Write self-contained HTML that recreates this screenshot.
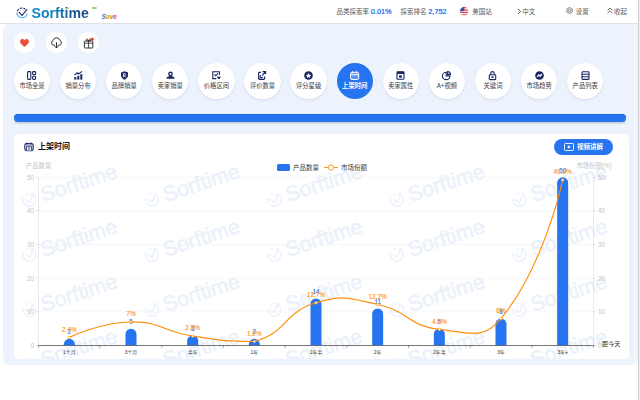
<!DOCTYPE html>
<html lang="zh-CN"><head><meta charset="utf-8"><title>Sorftime Save</title>
<style>
*{box-sizing:border-box;margin:0;padding:0}
html,body{width:640px;height:400px;overflow:hidden;background:#fff}
body{position:relative;font-family:"Liberation Sans","Noto Sans CJK SC",sans-serif;color:#333;font-size:6.5px;line-height:1}
.hdr{position:absolute;left:0;top:0;width:640px;height:23.7px;background:#fff;border-bottom:1px solid #dfe1e5}
.hdr .t{position:absolute;top:7.8px;white-space:nowrap;font-size:6.5px;line-height:8px;color:#5a5a5a}
.hdr .t b{font-weight:normal;color:#2168f0;font-size:7.3px;-webkit-text-stroke:.22px #2168f0}
.logo{position:absolute;left:31.6px;top:4.6px;font-weight:bold;font-size:14.1px;line-height:16px;letter-spacing:0;background:linear-gradient(90deg,#0a86cc 0%,#0d78bb 45%,#1c4f8c 75%,#1d4a85 100%);-webkit-background-clip:text;background-clip:text;color:transparent;white-space:nowrap}
.save{position:absolute;left:101.6px;top:12.6px;font-style:italic;font-weight:bold;font-size:6.6px;line-height:8px;white-space:nowrap}
.panel{position:absolute;left:3.4px;top:24.2px;width:635px;height:340.8px;background:#edf3fd;border-radius:6px 0 7px 7px}
.sb{position:absolute;left:637.8px;top:0;width:1.5px;height:400px;background:#c9cbcf}.sb2{position:absolute;left:639.3px;top:0;width:.7px;height:400px;background:#f1f1f1}.st{position:absolute;left:633.6px;top:24.2px;width:4.2px;height:338px;background:#f3f7fd}
.tc{position:absolute;top:31.5px;width:21px;height:21px;border-radius:50%;background:#fff}
.tc svg{position:absolute;left:0;top:0}
.nv{position:absolute;top:62.6px;width:36.4px;height:36.4px;border-radius:50%;background:#fff;color:#1b2560;box-shadow:0 1px 2.5px rgba(120,140,180,.22)}
.nv svg{position:absolute;left:13.7px;top:8.2px;overflow:visible}
.nv span{position:absolute;left:-6px;right:-6px;top:19.9px;text-align:center;font-size:6.3px;line-height:8px;color:#3a3a46;white-space:nowrap}
.nv.act{background:#2674ef;color:#fff;box-shadow:none}
.nv.act span{color:#fff;font-weight:bold}
.prog{position:absolute;left:14px;top:113.8px;width:612px;height:8.6px;border-radius:5px;background:#2674ef;box-shadow:0 1.5px 1.5px rgba(90,100,120,.28), inset 0 .8px 0 rgba(10,80,210,.55)}
.card{position:absolute;left:14px;top:133.8px;width:615px;height:225.2px;background:#fff;border-radius:4.5px}
.chart{position:absolute;left:14px;top:133px}
.ttl{position:absolute;left:38px;top:142.2px;font-size:8px;line-height:10px;font-weight:bold;color:#111;white-space:nowrap}
.btn{position:absolute;left:554px;top:139px;width:59px;height:16.4px;border-radius:9px;background:#2674ef;color:#fff}
.btn span{position:absolute;left:23px;top:4.2px;font-size:6.5px;line-height:8px;font-weight:bold;white-space:nowrap}
.btn svg{position:absolute;left:10px;top:4.4px}
svg text{font-family:"Liberation Sans","Noto Sans CJK SC",sans-serif}
.ax{font-size:6.3px;fill:#c4c4c4}
.xl{font-size:4.9px;fill:#333}
.bl{font-size:6.3px;fill:#2674ef;stroke:#2674ef;stroke-width:.1px}
.ll{font-size:6.5px;fill:#ff9214;stroke:#ff9214;stroke-width:.12px}
.lg{font-size:6.5px;fill:#3c3c3c}
</style></head><body>
<div class="hdr">
<svg style="position:absolute;left:15px;top:6px" width="15" height="15" viewBox="0 0 15 15"><defs><linearGradient id="lg1" x1="0" y1="0" x2="0" y2="1"><stop offset="0" stop-color="#2a8fd6"/><stop offset="1" stop-color="#3dbcec"/></linearGradient></defs><path d="M1.9 6.6 A5.2 5.2 0 0 0 12.2 7.6" fill="none" stroke="url(#lg1)" stroke-width="1.05"/><path d="M2.3 5.2 A5.2 5.2 0 0 1 10.6 3.4" fill="none" stroke="#1b2a6c" stroke-width="1.05" stroke-dasharray="2.6 1"/><path d="M3.8 5.9 L7 9.4 L12.2 3.3" fill="none" stroke="#1b2a6c" stroke-width="1.05"/></svg>
<div class="logo">Sorftime</div>
<svg style="position:absolute;left:91px;top:6px" width="8" height="4" viewBox="0 0 8 4"><path d="M1 2 H5.6" stroke="#5cb531" stroke-width="1.2"/></svg>
<svg style="position:absolute;left:65.8px;top:6.8px" width="4" height="3" viewBox="0 0 4 3"><path d="M0.2 1.8 L1.2 2.6 L3.6 0.3" stroke="#7ac943" stroke-width=".8" fill="none"/></svg>
<div class="save"><span style="color:#1a7fd0">S</span><span style="color:#f7931e">a</span><span style="color:#5cb531">v</span><span style="color:#ee3f8e">e</span></div>
<div class="t" style="left:336.5px">品类探索率 <b>0.01%</b></div>
<div class="t" style="left:400.5px">探索排名 <b>2,752</b></div>
<svg style="position:absolute;left:459.5px;top:7.2px" width="8.6" height="8.6" viewBox="0 0 10 10"><defs><clipPath id="fc"><circle cx="5" cy="5" r="5"/></clipPath></defs><g clip-path="url(#fc)"><rect width="10" height="10" fill="#fff"/><g fill="#e8404a"><rect y="0" width="10" height="1.45"/><rect y="2.85" width="10" height="1.45"/><rect y="5.7" width="10" height="1.45"/><rect y="8.55" width="10" height="1.45"/></g><rect width="5" height="5" fill="#3b4fa8"/></g></svg>
<div class="t" style="left:472.3px">美国站</div>
<svg style="position:absolute;left:517px;top:8px" width="5" height="7" viewBox="0 0 5 7"><path d="M1 1 L3.6 3.5 L1 6" fill="none" stroke="#333" stroke-width=".8"/></svg>
<div class="t" style="left:522.2px">中文</div>
<svg style="position:absolute;left:566.4px;top:7px" width="7.2" height="7.2" viewBox="0 0 10 10"><path d="M5 .7 L8.7 2.85 V7.15 L5 9.3 L1.3 7.15 V2.85 Z" fill="none" stroke="#555" stroke-width="1"/><circle cx="5" cy="5" r="1.7" fill="none" stroke="#555" stroke-width="1"/></svg>
<div class="t" style="left:575.8px">设置</div>
<svg style="position:absolute;left:606.6px;top:7.2px" width="6" height="7" viewBox="0 0 6 7"><path d="M.6 3.4 L3 1 L5.4 3.4 M.6 6.2 L3 3.8 L5.4 6.2" fill="none" stroke="#444" stroke-width=".75"/></svg>
<div class="t" style="left:614px">收起</div>
</div>
<div class="panel"></div>
<div class="st"></div><div class="sb"></div><div class="sb2"></div>
<div class="tc" style="left:14px"><svg width="21" height="21" viewBox="0 0 21 21"><path d="M10.5 15 C7.4 12.6 6 11.2 6 9.3 C6 7.9 7.1 6.9 8.3 6.9 C9.2 6.9 10 7.4 10.5 8.2 C11 7.4 11.8 6.9 12.7 6.9 C13.9 6.9 15 7.9 15 9.3 C15 11.2 13.6 12.6 10.5 15 Z" fill="#ea5138"/></svg></div>
<div class="tc" style="left:46px"><svg width="21" height="21" viewBox="0 0 21 21"><path d="M8.7 13.3 H7.9 A2.5 2.5 0 0 1 7.1 8.5 A3.5 3.5 0 0 1 13.9 8.5 A2.5 2.5 0 0 1 13.1 13.3 H12.3" fill="none" stroke="#222" stroke-width=".95" stroke-linecap="round"/><path d="M10.5 10.2 V15.8 M8.9 14.3 L10.5 16 L12.1 14.3" fill="none" stroke="#222" stroke-width=".95"/></svg></div>
<div class="tc" style="left:78px"><svg width="21" height="21" viewBox="0 0 21 21"><rect x="6.4" y="9" width="8.4" height="7" rx=".6" fill="none" stroke="#222" stroke-width=".9"/><path d="M6.4 11.2 H14.8 M10.6 9 V16 M10.6 9 C9 9 7.8 8.2 8.4 7.3 C9 6.5 10.2 7.4 10.6 9 C11 7.4 12.2 6.5 12.8 7.3 C13.4 8.2 12.2 9 10.6 9" fill="none" stroke="#222" stroke-width=".8"/><circle cx="14.2" cy="7.2" r="1.6" fill="#f5411e"/></svg></div>
<div class="nv" style="left:13.80px"><svg viewBox="0 0 9 9" width="9" height="9"><rect x="0.6" y="0.6" width="3.2" height="7.8" rx="0.8" stroke="currentColor" fill="none" stroke-width="1.1"/><rect x="5.6" y="0.6" width="3" height="3" rx="0.9" stroke="currentColor" fill="none" stroke-width="1.1"/><rect x="5.6" y="5.2" width="3" height="3.2" rx="0.9" stroke="currentColor" fill="none" stroke-width="1.1"/></svg><span>市场全景</span></div>
<div class="nv" style="left:59.90px"><svg viewBox="0 0 9 9" width="9" height="9"><rect x="0.3" y="6" width="2" height="2.6" fill="currentColor"/><rect x="3.3" y="4.8" width="2" height="3.8" fill="currentColor"/><rect x="6.3" y="3.2" width="2" height="5.4" fill="currentColor"/><path d="M0.4 4.2 L3.2 1.8 L4.6 3 L8 0.4" stroke="currentColor" fill="none" stroke-width="1.1"/></svg><span>销量分布</span></div>
<div class="nv" style="left:106.00px"><svg viewBox="0 0 9 9" width="9" height="9"><path d="M4.5 0.2 L8 1.4 V4.6 C8 6.6 6.4 7.9 4.5 8.8 C2.6 7.9 1 6.6 1 4.6 V1.4 Z" fill="currentColor"/><path d="M3.4 6.4 V2.6 H4.9 A1.1 1.1 0 0 1 4.9 4.7 H3.4 M4.6 4.7 L5.8 6.4" stroke="#fff" fill="none" stroke-width="0.8"/></svg><span>品牌销量</span></div>
<div class="nv" style="left:152.10px"><svg viewBox="0 0 9 9" width="9" height="9"><path d="M4.5 0.4 C6 0.4 6.8 1.4 6.8 2.8 C6.8 3.9 6.3 4.7 5.7 5.2 L8.4 6.2 V7.8 H0.6 V6.2 L3.3 5.2 C2.7 4.7 2.2 3.9 2.2 2.8 C2.2 1.4 3 0.4 4.5 0.4 Z" fill="currentColor"/><circle cx="4.5" cy="2.9" r="1" fill="#fff"/></svg><span>卖家销量</span></div>
<div class="nv" style="left:198.20px"><svg viewBox="0 0 9 9" width="9" height="9"><path d="M7.4 4 V0.8 H0.8 V7.6 H4.4" stroke="currentColor" fill="none" stroke-width="1.1"/><path d="M2.4 3.4 L3.8 4.8 L5.9 2.4" stroke="currentColor" fill="none" stroke-width="1.1"/><path d="M5.4 6 L6.9 8 L8.4 6 Z" fill="currentColor" stroke="currentColor" stroke-width="0.8"/></svg><span>价格区间</span></div>
<div class="nv" style="left:244.30px"><svg viewBox="0 0 9 9" width="9" height="9"><path d="M3 1.4 H1.4 A0.8 0.8 0 0 0 0.6 2.2 V7.6 A0.8 0.8 0 0 0 1.4 8.4 H5.8 A0.8 0.8 0 0 0 6.6 7.6 V5.6" stroke="currentColor" fill="none" stroke-width="1.1"/><path d="M4.6 0.6 H7.6 V3 M7.6 0.6 L4 4.6" stroke="currentColor" fill="none" stroke-width="1.1"/><path d="M2.2 4 V6.6 H4.8" stroke="currentColor" fill="none" stroke-width="1.1"/></svg><span>评价数量</span></div>
<div class="nv" style="left:290.40px"><svg viewBox="0 0 9 9" width="9" height="9"><circle cx="4.5" cy="4.5" r="4.3" fill="currentColor"/><path d="M4.5 1.9 L5.3 3.7 L7.2 3.9 L5.8 5.2 L6.2 7.1 L4.5 6.1 L2.8 7.1 L3.2 5.2 L1.8 3.9 L3.7 3.7 Z" fill="#fff"/></svg><span>评分星级</span></div>
<div class="nv act" style="left:336.50px"><svg viewBox="0 0 9 9" width="9" height="9"><rect x="0.5" y="1.3" width="8.2" height="7.2" rx="1.5" stroke="currentColor" fill="currentColor" fill-opacity=".25" stroke-width="1"/><path d="M0.5 3.7 H8.7 M2.6 0.2 V2.2 M6.6 0.2 V2.2" stroke="currentColor" fill="none" stroke-width="1.1"/></svg><span>上架时间</span></div>
<div class="nv" style="left:382.60px"><svg viewBox="0 0 9 9" width="9" height="9"><rect x="1" y="0.8" width="7" height="7.4" rx="0.6" stroke="currentColor" fill="none" stroke-width="1.1"/><rect x="1" y="0.8" width="7" height="2.2" fill="currentColor"/><rect x="3" y="4.4" width="3" height="2.2" fill="currentColor"/></svg><span>卖家属性</span></div>
<div class="nv" style="left:428.70px"><svg viewBox="0 0 9 9" width="9" height="9"><path d="M4.2 1.2 A3.7 3.7 0 1 0 7.9 4.9 H4.2 Z" stroke="currentColor" fill="none" stroke-width="1.1"/><path d="M5.6 0.5 A3 3 0 0 1 8.5 3.4 H5.6 Z" stroke="currentColor" fill="none" stroke-width="1.1"/></svg><span>A+视频</span></div>
<div class="nv" style="left:474.80px"><svg viewBox="0 0 9 9" width="9" height="9"><rect x="1.3" y="3.8" width="6.4" height="4.8" rx="0.7" stroke="currentColor" fill="none" stroke-width="1.1"/><path d="M2.8 3.8 V2.3 A1.7 1.7 0 0 1 6.2 2.3 V3.8" stroke="currentColor" fill="none" stroke-width="1.1"/><rect x="3.4" y="5.4" width="2.2" height="1.6" fill="currentColor"/></svg><span>关键词</span></div>
<div class="nv" style="left:520.90px"><svg viewBox="0 0 9 9" width="9" height="9"><circle cx="4.5" cy="4.5" r="4.3" fill="currentColor"/><path d="M2.2 5.8 L3.8 3.8 L5.2 5.2 L6.9 2.8" stroke="#fff" fill="none" stroke-width="1.2"/></svg><span>市场趋势</span></div>
<div class="nv" style="left:567.00px"><svg viewBox="0 0 9 9" width="9" height="9"><rect x="1" y="0.8" width="7" height="7.6" rx="0.9" stroke="currentColor" fill="none" stroke-width="1.1"/><path d="M1 3.2 H8 M1 5.7 H8" stroke="currentColor" fill="none" stroke-width="1.1"/></svg><span>产品列表</span></div>
<div class="prog"></div>
<div class="card"></div>
<svg class="chart" width="615" height="226" viewBox="14 133 615 226">
<defs><g id="wm"><g transform="rotate(-18)"><circle cx="0.5" cy="0" r="6.4" fill="none" stroke="#edf3fc" stroke-width="1.6" stroke-dasharray="30 4 3 3.2" transform="rotate(-60 0.5 0)"/><path d="M-3.4 -1.6 L0 2.4 L6.4 -5.4" fill="none" stroke="#edf3fc" stroke-width="1.6"/><text x="13" y="6.2" font-family="'Liberation Sans',sans-serif" font-weight="normal" font-size="21.3" stroke="#ebf1fb" stroke-width=".5" fill="#ebf1fb">Sorftime</text></g></g>
<clipPath id="cc"><rect x="14" y="158" width="615" height="201"/></clipPath></defs>
<g clip-path="url(#cc)">
<use href="#wm" x="29.0" y="200.0"/>
<use href="#wm" x="151.5" y="200.0"/>
<use href="#wm" x="274.0" y="200.0"/>
<use href="#wm" x="396.5" y="200.0"/>
<use href="#wm" x="519.0" y="200.0"/>
<use href="#wm" x="641.5" y="200.0"/>
<use href="#wm" x="29.0" y="255.0"/>
<use href="#wm" x="151.5" y="255.0"/>
<use href="#wm" x="274.0" y="255.0"/>
<use href="#wm" x="396.5" y="255.0"/>
<use href="#wm" x="519.0" y="255.0"/>
<use href="#wm" x="641.5" y="255.0"/>
<use href="#wm" x="29.0" y="310.0"/>
<use href="#wm" x="151.5" y="310.0"/>
<use href="#wm" x="274.0" y="310.0"/>
<use href="#wm" x="396.5" y="310.0"/>
<use href="#wm" x="519.0" y="310.0"/>
<use href="#wm" x="641.5" y="310.0"/>
<use href="#wm" x="29.0" y="365.0"/>
<use href="#wm" x="151.5" y="365.0"/>
<use href="#wm" x="274.0" y="365.0"/>
<use href="#wm" x="396.5" y="365.0"/>
<use href="#wm" x="519.0" y="365.0"/>
<use href="#wm" x="641.5" y="365.0"/>
</g>
<line x1="38.5" x2="593.5" y1="311.86" y2="311.86" stroke="#eef0f3" stroke-width="0.6"/>
<line x1="38.5" x2="593.5" y1="278.22" y2="278.22" stroke="#eef0f3" stroke-width="0.6"/>
<line x1="38.5" x2="593.5" y1="244.58" y2="244.58" stroke="#eef0f3" stroke-width="0.6"/>
<line x1="38.5" x2="593.5" y1="210.94" y2="210.94" stroke="#eef0f3" stroke-width="0.6"/>
<line x1="38.5" x2="593.5" y1="177.30" y2="177.30" stroke="#eef0f3" stroke-width="0.6"/>
<line x1="38.5" x2="38.5" y1="177.30" y2="345.50" stroke="#dcdcdc" stroke-width="0.6"/>
<line x1="593.5" x2="593.5" y1="177.30" y2="345.50" stroke="#dcdcdc" stroke-width="0.6"/>
<line x1="36.0" x2="38.5" y1="345.50" y2="345.50" stroke="#cfcfcf" stroke-width="0.6"/>
<line x1="593.5" x2="596.0" y1="345.50" y2="345.50" stroke="#cfcfcf" stroke-width="0.6"/>
<text x="34.0" y="347.80" text-anchor="end" class="ax">0</text>
<text x="598.0" y="347.80" text-anchor="start" class="ax">0</text>
<line x1="36.0" x2="38.5" y1="311.86" y2="311.86" stroke="#cfcfcf" stroke-width="0.6"/>
<line x1="593.5" x2="596.0" y1="311.86" y2="311.86" stroke="#cfcfcf" stroke-width="0.6"/>
<text x="34.0" y="314.16" text-anchor="end" class="ax">10</text>
<text x="598.0" y="314.16" text-anchor="start" class="ax">10</text>
<line x1="36.0" x2="38.5" y1="278.22" y2="278.22" stroke="#cfcfcf" stroke-width="0.6"/>
<line x1="593.5" x2="596.0" y1="278.22" y2="278.22" stroke="#cfcfcf" stroke-width="0.6"/>
<text x="34.0" y="280.52" text-anchor="end" class="ax">20</text>
<text x="598.0" y="280.52" text-anchor="start" class="ax">20</text>
<line x1="36.0" x2="38.5" y1="244.58" y2="244.58" stroke="#cfcfcf" stroke-width="0.6"/>
<line x1="593.5" x2="596.0" y1="244.58" y2="244.58" stroke="#cfcfcf" stroke-width="0.6"/>
<text x="34.0" y="246.88" text-anchor="end" class="ax">30</text>
<text x="598.0" y="246.88" text-anchor="start" class="ax">30</text>
<line x1="36.0" x2="38.5" y1="210.94" y2="210.94" stroke="#cfcfcf" stroke-width="0.6"/>
<line x1="593.5" x2="596.0" y1="210.94" y2="210.94" stroke="#cfcfcf" stroke-width="0.6"/>
<text x="34.0" y="213.24" text-anchor="end" class="ax">40</text>
<text x="598.0" y="213.24" text-anchor="start" class="ax">40</text>
<line x1="36.0" x2="38.5" y1="177.30" y2="177.30" stroke="#cfcfcf" stroke-width="0.6"/>
<line x1="593.5" x2="596.0" y1="177.30" y2="177.30" stroke="#cfcfcf" stroke-width="0.6"/>
<text x="34.0" y="179.60" text-anchor="end" class="ax">50</text>
<text x="598.0" y="179.60" text-anchor="start" class="ax">50</text>
<text x="26" y="167.6" class="ax">产品数量</text>
<text x="611.5" y="167.6" text-anchor="end" class="ax">市场份额(%)</text>
<text x="602" y="346.2" class="xl" style="font-size:6.2px">距今天</text>
<path d="M63.83 345.50 V344.27 A5.50 5.50 0 0 1 74.83 344.27 V345.50 Z" fill="#2674ef"/>
<path d="M125.50 345.50 V334.18 A5.50 5.50 0 0 1 136.50 334.18 V345.50 Z" fill="#2674ef"/>
<path d="M187.17 345.50 V340.91 A5.50 5.50 0 0 1 198.17 340.91 V345.50 Z" fill="#2674ef"/>
<path d="M248.83 345.50 V344.27 A5.50 5.50 0 0 1 259.83 344.27 V345.50 Z" fill="#2674ef"/>
<path d="M310.50 345.50 V303.90 A5.50 5.50 0 0 1 321.50 303.90 V345.50 Z" fill="#2674ef"/>
<path d="M372.17 345.50 V314.00 A5.50 5.50 0 0 1 383.17 314.00 V345.50 Z" fill="#2674ef"/>
<path d="M433.83 345.50 V334.18 A5.50 5.50 0 0 1 444.83 334.18 V345.50 Z" fill="#2674ef"/>
<path d="M495.50 345.50 V324.09 A5.50 5.50 0 0 1 506.50 324.09 V345.50 Z" fill="#2674ef"/>
<path d="M557.17 345.50 V182.80 A5.50 5.50 0 0 1 568.17 182.80 V345.50 Z" fill="#2674ef"/>
<line x1="38.5" x2="593.5" y1="345.50" y2="345.50" stroke="#555" stroke-width="0.8"/>
<line x1="38.50" x2="38.50" y1="345.50" y2="347.70" stroke="#555" stroke-width="0.6"/>
<line x1="100.17" x2="100.17" y1="345.50" y2="347.70" stroke="#555" stroke-width="0.6"/>
<line x1="161.83" x2="161.83" y1="345.50" y2="347.70" stroke="#555" stroke-width="0.6"/>
<line x1="223.50" x2="223.50" y1="345.50" y2="347.70" stroke="#555" stroke-width="0.6"/>
<line x1="285.17" x2="285.17" y1="345.50" y2="347.70" stroke="#555" stroke-width="0.6"/>
<line x1="346.83" x2="346.83" y1="345.50" y2="347.70" stroke="#555" stroke-width="0.6"/>
<line x1="408.50" x2="408.50" y1="345.50" y2="347.70" stroke="#555" stroke-width="0.6"/>
<line x1="470.17" x2="470.17" y1="345.50" y2="347.70" stroke="#555" stroke-width="0.6"/>
<line x1="531.83" x2="531.83" y1="345.50" y2="347.70" stroke="#555" stroke-width="0.6"/>
<line x1="593.50" x2="593.50" y1="345.50" y2="347.70" stroke="#555" stroke-width="0.6"/>
<text x="69.33" y="353.60" text-anchor="middle" class="xl">1个月</text>
<text x="131.00" y="353.60" text-anchor="middle" class="xl">3个月</text>
<text x="192.67" y="353.60" text-anchor="middle" class="xl">半年</text>
<text x="254.33" y="353.60" text-anchor="middle" class="xl">1年</text>
<text x="316.00" y="353.60" text-anchor="middle" class="xl">1年半</text>
<text x="377.67" y="353.60" text-anchor="middle" class="xl">2年</text>
<text x="439.33" y="353.60" text-anchor="middle" class="xl">2年半</text>
<text x="501.00" y="353.60" text-anchor="middle" class="xl">3年</text>
<text x="562.67" y="353.60" text-anchor="middle" class="xl">3年+</text>
<text x="69.33" y="334.47" text-anchor="middle" class="bl">2</text>
<text x="131.00" y="324.38" text-anchor="middle" class="bl">5</text>
<text x="192.67" y="331.11" text-anchor="middle" class="bl">3</text>
<text x="254.33" y="334.47" text-anchor="middle" class="bl">2</text>
<text x="316.00" y="294.10" text-anchor="middle" class="bl">14</text>
<text x="377.67" y="304.20" text-anchor="middle" class="bl">11</text>
<text x="439.33" y="324.38" text-anchor="middle" class="bl">5</text>
<text x="501.00" y="314.29" text-anchor="middle" class="bl">8</text>
<text x="562.67" y="173.00" text-anchor="middle" class="bl">50</text>
<path d="M69.33 337.43 C69.33 337.43 100.09 322.29 131.00 321.95 C161.76 321.62 161.50 331.15 192.67 336.08 C223.16 340.91 225.99 341.46 254.33 341.46 C287.66 332.46 282.62 312.79 316.00 302.78 C344.29 294.29 347.99 298.06 377.67 304.46 C409.66 311.35 407.57 325.71 439.33 329.35 C469.23 332.78 482.99 340.40 501.00 318.59 C544.65 265.72 562.67 179.99 562.67 179.99" fill="none" stroke="#ff8f0c" stroke-width="1.15"/>
<circle cx="69.33" cy="337.43" r="1.3" fill="#fff" stroke="#ff8f0c" stroke-width="0.7"/>
<circle cx="131.00" cy="321.95" r="1.3" fill="#fff" stroke="#ff8f0c" stroke-width="0.7"/>
<circle cx="192.67" cy="336.08" r="1.3" fill="#fff" stroke="#ff8f0c" stroke-width="0.7"/>
<circle cx="254.33" cy="341.46" r="1.3" fill="#fff" stroke="#ff8f0c" stroke-width="0.7"/>
<circle cx="316.00" cy="302.78" r="1.3" fill="#fff" stroke="#ff8f0c" stroke-width="0.7"/>
<circle cx="377.67" cy="304.46" r="1.3" fill="#fff" stroke="#ff8f0c" stroke-width="0.7"/>
<circle cx="439.33" cy="329.35" r="1.3" fill="#fff" stroke="#ff8f0c" stroke-width="0.7"/>
<circle cx="501.00" cy="318.59" r="1.3" fill="#fff" stroke="#ff8f0c" stroke-width="0.7"/>
<circle cx="562.67" cy="179.99" r="1.3" fill="#fff" stroke="#ff8f0c" stroke-width="0.7"/>
<text x="69.33" y="331.63" text-anchor="middle" class="ll">2.4%</text>
<text x="131.00" y="316.15" text-anchor="middle" class="ll">7%</text>
<text x="192.67" y="330.28" text-anchor="middle" class="ll">2.8%</text>
<text x="254.33" y="335.66" text-anchor="middle" class="ll">1.2%</text>
<text x="316.00" y="296.98" text-anchor="middle" class="ll">12.7%</text>
<text x="377.67" y="298.66" text-anchor="middle" class="ll">12.2%</text>
<text x="439.33" y="323.55" text-anchor="middle" class="ll">4.8%</text>
<text x="501.00" y="312.79" text-anchor="middle" class="ll">8%</text>
<text x="562.67" y="174.19" text-anchor="middle" class="ll">49.2%</text>
<rect x="277" y="164" width="13" height="7" rx="1.6" fill="#2674ef"/>
<text x="293" y="170" class="lg">产品数量</text>
<line x1="324" x2="338" y1="167.5" y2="167.5" stroke="#ff8f0c" stroke-width="0.9"/>
<circle cx="331" cy="167.5" r="2.7" fill="#fff" stroke="#ff8f0c" stroke-width="0.9"/>
<text x="341" y="170" class="lg">市场份额</text>
</svg>
<svg style="position:absolute;left:23.5px;top:142.4px" width="10" height="9.4" viewBox="0 0 10 9.4"><rect x=".8" y="1.6" width="8.4" height="7" rx="1.6" fill="#cfd6e6" stroke="#26316b" stroke-width="1.1"/><rect x="2.6" y="4" width="4.8" height="4.6" fill="#fff"/><path d="M2.6 8.4 V4.2 H7.4 V8.4 M5 4.2 V8.4" fill="none" stroke="#26316b" stroke-width=".9"/><path d="M2.8 .5 V2.4 M7.2 .5 V2.4" stroke="#26316b" stroke-width="1.1"/></svg>
<div class="ttl">上架时间</div>
<div class="btn"><svg width="10" height="8" viewBox="0 0 10 8"><rect x=".5" y=".5" width="9" height="7" rx=".8" fill="none" stroke="#fff" stroke-width=".9"/><path d="M3.8 2.2 L6.8 4 L3.8 5.8 Z" fill="#fff"/></svg><span>视频讲解</span></div>
</body></html>
